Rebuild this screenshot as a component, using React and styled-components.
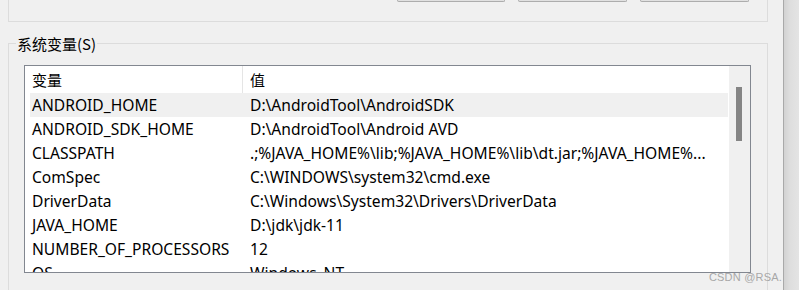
import styled, { createGlobalStyle } from "styled-components";

const GlobalStyle = createGlobalStyle`
  html, body {
    margin: 0;
    padding: 0;
    background: #f0f0f0;
  }
  body {
    font-family: "Noto Sans", "Noto Sans CJK SC", sans-serif;
    font-size: 15.6px;
    color: #000;
  }
`;

const Screen = styled.div`
  display: flex;
  width: 799px;
  height: 290px;
  overflow: hidden;
  background: #f0f0f0;
`;

const Dialog = styled.div`
  position: relative;
  width: 784px;
  display: flex;
  flex-direction: column;
  gap: 21px;
  padding-left: 8px;
  padding-right: 15px;
  box-sizing: border-box;
`;

const WindowEdge = styled.div`
  width: 15px;
  border-left: 1px solid #a9a9a9;
  background: linear-gradient(to right, #d2d2d2, #dedede 40%, #e4e4e4);
`;

const TopGroup = styled.div`
  height: 22px;
  border: 1px solid #dcdcdc;
  border-top: none;
  box-sizing: border-box;
  display: flex;
  justify-content: flex-end;
  align-items: flex-start;
  gap: 13px;
  padding-right: 18px;
`;

const StubButton = styled.div`
  width: ${(p) => p.$w}px;
  height: 2px;
  border: 1px solid #adadad;
  border-top: none;
  border-radius: 0 0 3px 3px;
  background: #e1e1e1;
  box-sizing: border-box;
`;

const Group = styled.div`
  position: relative;
  flex: 1;
  border: 1px solid #dcdcdc;
  border-bottom: none;
  padding: 21px 16px 0 15px;
`;

const Legend = styled.span`
  position: absolute;
  top: -9px;
  left: 7px;
  padding: 0 1px;
  background: #f0f0f0;
  font-family: "Noto Sans CJK SC", sans-serif;
  font-size: 15px;
  line-height: 17px;
`;

const ListBox = styled.div`
  height: 208px;
  border: 1px solid #828790;
  background: #fff;
  box-sizing: border-box;
  display: flex;
  overflow: hidden;
`;

const ListMain = styled.div`
  flex: 1;
  display: flex;
  flex-direction: column;
  overflow: hidden;
`;

const HeaderRow = styled.div`
  display: flex;
  height: 27px;
  flex-shrink: 0;
`;

const HeaderCell = styled.div`
  width: ${(p) => p.$w || "auto"};
  flex: ${(p) => (p.$w ? "none" : 1)};
  display: flex;
  align-items: center;
  padding-left: 7px;
  box-sizing: border-box;
  border-right: ${(p) => (p.$divider ? "1px solid #e5e5e5" : "none")};
  font-family: "Noto Sans CJK SC", sans-serif;
  font-size: 15px;
`;

const Rows = styled.div`
  padding-left: 5px;
`;

const Row = styled.div`
  display: flex;
  height: 24px;
  align-items: center;
  background: ${(p) => (p.$selected ? "#f0f0f0" : "#fff")};
  white-space: nowrap;
`;

const Cell = styled.div`
  width: ${(p) => p.$w || "auto"};
  flex: ${(p) => (p.$w ? "none" : 1)};
  padding-left: 2px;
  box-sizing: border-box;
  overflow: hidden;
`;

const ScrollTrack = styled.div`
  width: 22px;
  border-left: 1px solid #fff;
  background: #f0f0f0;
  box-sizing: border-box;
  padding: 21px 0 0 7px;
`;

const Thumb = styled.div`
  width: 6px;
  height: 54px;
  background: #858585;
`;

const Watermark = styled.span`
  position: absolute;
  right: 1px;
  bottom: 7px;
  font-family: "Liberation Sans", sans-serif;
  font-size: 11px;
  color: #a8a8a8;
  letter-spacing: 0.2px;
`;

const rows = [
  ["ANDROID_HOME", "D:\\AndroidTool\\AndroidSDK"],
  ["ANDROID_SDK_HOME", "D:\\AndroidTool\\Android AVD"],
  ["CLASSPATH", ".;%JAVA_HOME%\\lib;%JAVA_HOME%\\lib\\dt.jar;%JAVA_HOME%..."],
  ["ComSpec", "C:\\WINDOWS\\system32\\cmd.exe"],
  ["DriverData", "C:\\Windows\\System32\\Drivers\\DriverData"],
  ["JAVA_HOME", "D:\\jdk\\jdk-11"],
  ["NUMBER_OF_PROCESSORS", "12"],
  ["OS", "Windows_NT"],
];

export default function App() {
  return (
    <Screen>
      <GlobalStyle />
      <Dialog>
        <TopGroup>
          <StubButton $w={108} />
          <StubButton $w={109} />
          <StubButton $w={109} />
        </TopGroup>
        <Group>
          <Legend>系统变量(S)</Legend>
          <ListBox>
            <ListMain>
              <HeaderRow>
                <HeaderCell $w="218px" $divider>
                  变量
                </HeaderCell>
                <HeaderCell>值</HeaderCell>
              </HeaderRow>
              <Rows>
                {rows.map(([name, value], i) => (
                  <Row key={name} $selected={i === 0}>
                    <Cell $w="218px">{name}</Cell>
                    <Cell>{value}</Cell>
                  </Row>
                ))}
              </Rows>
            </ListMain>
            <ScrollTrack>
              <Thumb />
            </ScrollTrack>
          </ListBox>
        </Group>
        <Watermark>CSDN @RSA.</Watermark>
      </Dialog>
      <WindowEdge />
    </Screen>
  );
}
